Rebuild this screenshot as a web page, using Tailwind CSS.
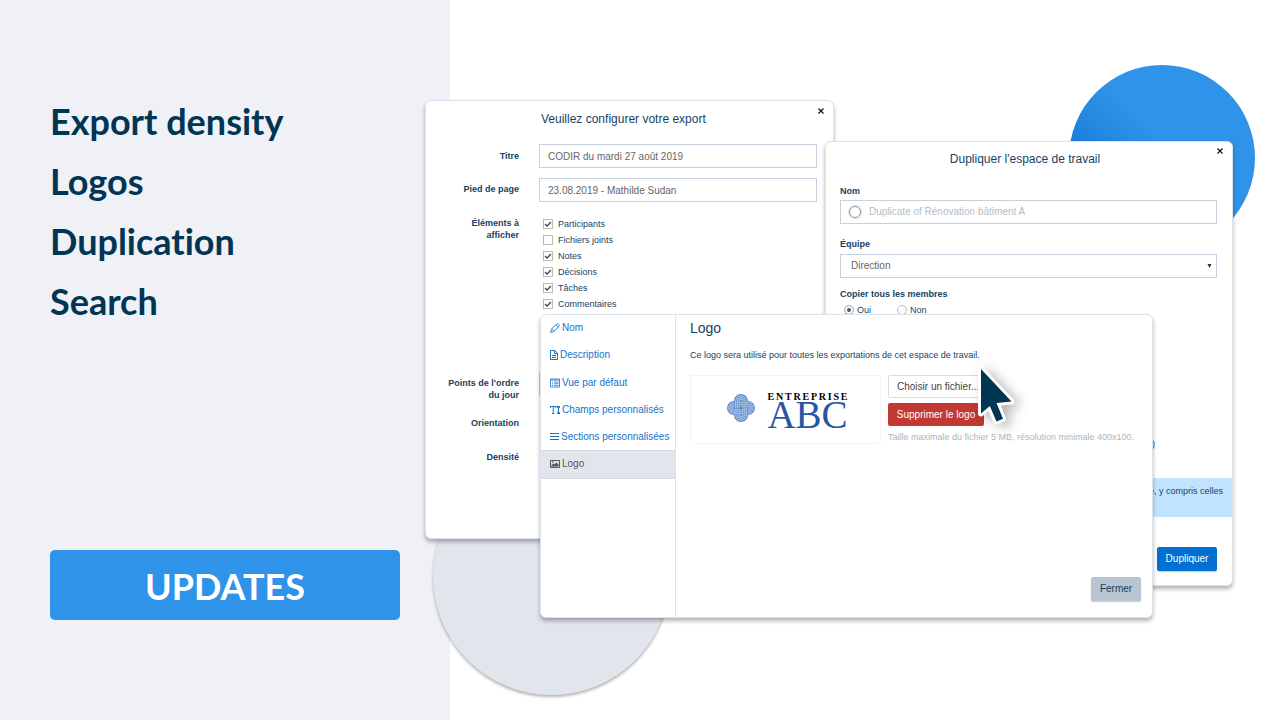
<!DOCTYPE html>
<html lang="fr">
<head>
<meta charset="utf-8">
<meta name="viewport" content="width=device-width, initial-scale=1">
<title>Updates</title>
<script src="https://cdn.jsdelivr.net/npm/@tailwindcss/browser@4"></script>
</head>
<body class="bg-white">
<div class="relative flex min-h-screen overflow-hidden font-['Liberation_Sans',Arial,sans-serif] text-[9px] leading-3 text-[#173f5f]">

  <aside class="flex w-[450px] shrink-0 flex-col justify-between bg-[#f0f1f6] px-[50px] pt-[91px] pb-[100px] font-['Lato',sans-serif] text-4xl font-bold text-[#003554] [font-variant-ligatures:none]" lang="en">
    <ul class="leading-[60px]">
      <li>Export density</li>
      <li>Logos</li>
      <li>Duplication</li>
      <li>Search</li>
    </ul>
    <button type="button" class="h-[70px] rounded-[5px] bg-[#2f93e9] pt-0.5 text-white">UPDATES</button>
  </aside>

  <main>
    <!-- decorative discs -->
    <div class="absolute top-[65px] left-[1069px] size-[186px] rounded-full bg-linear-to-tr from-[#0f78d4] from-20% to-[#2f93e9] to-55%"></div>
    <div class="absolute top-[458px] left-[433px] size-[237px] rounded-full bg-[#e1e6ed] shadow-[0_2px_3px_rgba(0,0,0,0.3)]"></div>

    <!-- export dialog -->
    <section class="absolute top-[100px] left-[425px] h-[439px] w-[409px] rounded-md border border-[#dde3ec] bg-white pt-2.5 pr-4 shadow-[0_3px_4px_rgba(0,0,0,0.3)]">
      <button type="button" aria-label="Fermer la configuration" class="absolute top-1.5 right-2 grid size-2 place-items-center">
        <svg class="size-[6px]" viewBox="0 0 6 6" fill="none" stroke="#111" stroke-width="1.200"><path d="M.5.500l5 5M5.500.500l-5 5"/></svg>
      </button>
      <h2 class="pl-[115px] text-xs leading-4">Veuillez configurer votre export</h2>
      <form class="mt-[17px] grid grid-cols-[93px_1fr] gap-x-5 gap-y-2.5">
        <label for="titre" class="pt-1.5 text-right font-bold">Titre</label>
        <input id="titre" value="CODIR du mardi 27 août 2019" class="h-6 border border-[#c5d1de] px-2 text-[10px] text-[#666]">
        <label for="pied" class="pt-[5px] text-right font-bold">Pied de page</label>
        <input id="pied" value="23.08.2019 - Mathilde Sudan" class="h-6 border border-[#c5d1de] px-2 text-[10px] text-[#666]">
        <p class="pt-[5px] pl-8 text-right font-bold">Éléments à afficher</p>
        <div class="flex h-[150px] flex-col pt-1 pl-1 leading-4">
          <label class="flex items-center gap-[5px]"><span class="grid"><input type="checkbox" checked class="col-start-1 row-start-1 size-[10px] appearance-none border border-[#bbb]"><svg class="col-start-1 row-start-1 size-[10px]" viewBox="0 0 10 10" fill="none" stroke="#444" stroke-width="1.300"><path d="M2 5l2 2 4-4"/></svg></span>Participants</label>
          <label class="flex items-center gap-[5px]"><span class="grid"><input type="checkbox" class="col-start-1 row-start-1 size-[10px] appearance-none border border-[#bbb]"></span>Fichiers joints</label>
          <label class="flex items-center gap-[5px]"><span class="grid"><input type="checkbox" checked class="col-start-1 row-start-1 size-[10px] appearance-none border border-[#bbb]"><svg class="col-start-1 row-start-1 size-[10px]" viewBox="0 0 10 10" fill="none" stroke="#444" stroke-width="1.300"><path d="M2 5l2 2 4-4"/></svg></span>Notes</label>
          <label class="flex items-center gap-[5px]"><span class="grid"><input type="checkbox" checked class="col-start-1 row-start-1 size-[10px] appearance-none border border-[#bbb]"><svg class="col-start-1 row-start-1 size-[10px]" viewBox="0 0 10 10" fill="none" stroke="#444" stroke-width="1.300"><path d="M2 5l2 2 4-4"/></svg></span>Décisions</label>
          <label class="flex items-center gap-[5px]"><span class="grid"><input type="checkbox" checked class="col-start-1 row-start-1 size-[10px] appearance-none border border-[#bbb]"><svg class="col-start-1 row-start-1 size-[10px]" viewBox="0 0 10 10" fill="none" stroke="#444" stroke-width="1.300"><path d="M2 5l2 2 4-4"/></svg></span>Tâches</label>
          <label class="flex items-center gap-[5px]"><span class="grid"><input type="checkbox" checked class="col-start-1 row-start-1 size-[10px] appearance-none border border-[#bbb]"><svg class="col-start-1 row-start-1 size-[10px]" viewBox="0 0 10 10" fill="none" stroke="#444" stroke-width="1.300"><path d="M2 5l2 2 4-4"/></svg></span>Commentaires</label>
        </div>
        <p class="pt-[5px] pl-4 text-right font-bold">Points de l'ordre du jour</p><span class="h-6 border border-[#c5d1de]"></span>
        <p class="pt-[6px] text-right font-bold">Orientation</p><span></span>
        <p class="pt-3 text-right font-bold">Densité</p><span></span>
      </form>
    </section>

    <!-- duplicate dialog -->
    <section class="absolute top-[141px] left-[825px] flex h-[445px] w-[408px] flex-col rounded-md border border-[#dde3ec] bg-white pt-[9px] shadow-[0_3px_4px_rgba(0,0,0,0.3)]">
      <button type="button" aria-label="Fermer la duplication" class="absolute top-[5px] right-2 grid size-2 place-items-center">
        <svg class="size-[6px]" viewBox="0 0 6 6" fill="none" stroke="#111" stroke-width="1.200"><path d="M.5.500l5 5M5.500.500l-5 5"/></svg>
      </button>
      <h2 class="pr-2 text-center text-xs leading-4">Dupliquer l'espace de travail</h2>
      <form class="flex flex-1 flex-col pt-[18px]">
        <label for="nom" class="px-3.5 font-bold">Nom</label>
        <div class="mt-[3px] mr-[15px] ml-3.5 flex h-6 items-center gap-2 border border-[#c5d1de] px-2">
          <span class="size-3 shrink-0 rounded-full border-[1px] border-[#8d99a5] ring-1 ring-[#8d99a5]/30"></span>
          <input id="nom" placeholder="Duplicate of Rénovation bâtiment A" class="w-full text-[10px] placeholder:text-[#b3bdc8]">
        </div>
        <label for="equipe" class="mt-3.5 px-3.5 font-bold">Équipe</label>
        <div class="mt-1 mr-[15px] ml-3.5 grid items-center">
          <select id="equipe" class="col-start-1 row-start-1 h-6 appearance-none border border-[#c5d1de] px-2.5 text-[10px] text-[#666]"><option>Direction</option></select>
          <svg class="pointer-events-none col-start-1 row-start-1 mr-[5px] h-1 w-[5px] justify-self-end" viewBox="0 0 5 4" fill="#333"><path d="M.5 0h4L2.500 4z"/></svg>
        </div>
        <fieldset class="px-3.5 pt-2.5">
          <legend class="contents font-bold">Copier tous les membres</legend>
          <div class="mt-1 flex gap-[26px] pl-1">
            <label class="flex items-center gap-[3px]"><input type="radio" name="membres" checked class="size-[10px] appearance-none rounded-full border border-[#bbb] bg-[#555] shadow-[inset_0_0_0_2px_white]">Oui</label>
            <label class="flex items-center gap-[3px]"><input type="radio" name="membres" class="size-[10px] appearance-none rounded-full border border-[#bbb]">Non</label>
          </div>
        </fieldset>
        <p class="mt-[122px] pr-[77px] text-right">)</p>
        <p class="mt-7 h-[39px] bg-[#c0e4ff] px-[9px] pt-[7px] text-right">e, y compris celles</p>
        <button type="button" class="mt-[30px] mr-[15px] h-6 w-[60px] self-end rounded-[2px] bg-[#0070d2] text-[10px] text-white shadow-[0_1px_1px_rgba(0,0,0,0.2)]">Dupliquer</button>
      </form>
    </section>

    <!-- workspace settings dialog -->
    <section class="absolute top-[314px] left-[540px] flex h-[304px] w-[613px] rounded-md border border-[#dde3ec] bg-white text-[10px] shadow-[0_3px_4px_rgba(0,0,0,0.3)]">
      <nav class="flex w-[135px] shrink-0 flex-col border-r border-[#dde3ec] whitespace-nowrap text-[#1572cb]">
        <a href="#nom" class="flex h-[27px] items-center gap-0.5 pb-0.5 pl-[9px]">
          <svg class="size-[10px] shrink-0" viewBox="0 0 10 10" fill="none" stroke="currentColor" stroke-width=".9"><path d="M.7 9.300l.6-3L6.700.9q.6-.5 1.200 0L9.100 2.100q.5.600 0 1.200L3.700 8.700zM5.700 2l2.300 2.300M2 6.200l1.800 1.800"/></svg>Nom</a>
        <a href="#description" class="flex h-[27px] items-center gap-0.5 pb-0.5 pl-[9px]">
          <svg class="h-[10px] w-2 shrink-0" viewBox="0 0 8 10" fill="none" stroke="currentColor"><path d="M.5.500h4.300l2.700 2.700v6.300h-7zM4.500.500v3h3M2 5.500h4M2 7.500h4"/></svg>Description</a>
        <a href="#vue" class="flex h-[27px] items-center gap-0.5 pl-[9px]">
          <svg class="size-[10px] shrink-0" viewBox="0 0 10 10" fill="none" stroke="currentColor" stroke-width=".8"><path d="M.5 1h9v8h-9zM.5 2h9M2 4h1M4 4h4.500M2 5.700h1M4 5.700h4.500M2 7.400h1M4 7.400h4.500"/></svg>Vue par défaut</a>
        <a href="#champs" class="flex h-[27px] items-center gap-0.5 pl-[9px]">
          <svg class="size-[10px] shrink-0" viewBox="0 0 10 10" fill="none" stroke="currentColor"><path d="M.500 3V1.500h5.500V3M3.250 1.500v7M2 8.500h2.500M8.500 1.500v7M7 1.500h3M7 8.500h3M7.300 3l1.200-1.200L9.700 3M7.300 7l1.200 1.200L9.700 7"/></svg>Champs personnalisés</a>
        <a href="#sections" class="flex h-[27px] items-center gap-0.5 pl-[9px]">
          <svg class="h-[10px] w-[9px] shrink-0" viewBox="0 0 9 10" fill="none" stroke="currentColor"><path d="M0 1.500h9M0 4.500h9M0 7.500h9"/></svg>Sections personnalisées</a>
        <a href="#logo" aria-current="page" class="flex h-[29px] items-center gap-0.5 border-y border-[#d3dae3] bg-[#e1e6ed] pb-px pl-[9px] text-[#555]">
          <svg class="size-[10px] shrink-0" viewBox="0 0 10 10" fill="none" stroke="currentColor"><path d="M.5 1.500h9v7h-9z"/><path d="M1.500 7.500V6L3.500 4.500l1 1L6.500 3.500l2 2v2zM2 2.500h1.500v1.200H2z" fill="currentColor" stroke="none"/></svg>Logo</a>
      </nav>
      <div class="flex flex-1 flex-col pt-1 pr-[11px] pb-4 pl-3.5">
        <h2 class="text-sm leading-[18px]">Logo</h2>
        <p class="mt-3 text-[9px]">Ce logo sera utilisé pour toutes les exportations de cet espace de travail.</p>
        <div class="mt-3.5 flex gap-[7px]">
          <div class="flex h-[69px] w-[191px] shrink-0 items-center justify-center gap-3 rounded-[2px] border border-[#f3f4f6] pl-1">
            <svg class="mb-1 size-7" viewBox="0 0 30 30" fill="none">
              <defs>
                <g id="lobe">
                  <path stroke="#5a86c8" stroke-width="7.500" d="M11.200 16V7.600a3.800 3.800 0 0 1 7.600 0V16"/>
                  <path stroke="#b4caea" stroke-width="5" d="M11.200 16V7.600a3.800 3.800 0 0 1 7.600 0V16"/>
                  <path stroke="#6a93d0" stroke-width="3" d="M11.200 16V7.600a3.800 3.800 0 0 1 7.600 0V16"/>
                  <path stroke="#b4caea" stroke-width="1" d="M11.200 16V7.600a3.800 3.800 0 0 1 7.600 0V16"/>
                </g>
                <g id="strand">
                  <path fill="#6a93d0" d="M7.500 7h6.500v8.500H7.500z"/>
                  <path stroke="#b4caea" d="M9 7v8.500M11 7v8.500M13 7v8.500"/>
                </g>
              </defs>
              <use href="#lobe"/>
              <use href="#lobe" transform="rotate(90 15 15)"/>
              <use href="#lobe" transform="rotate(180 15 15)"/>
              <use href="#lobe" transform="rotate(270 15 15)"/>
              <use href="#strand"/>
              <use href="#strand" transform="rotate(90 15 15)"/>
              <use href="#strand" transform="rotate(180 15 15)"/>
              <use href="#strand" transform="rotate(270 15 15)"/>
              <path fill="#3f6fb8" d="M14 14h2v2h-2z"/>
            </svg>
            <div class="flex flex-col items-center pt-0.5 font-['Liberation_Serif',serif]">
              <span class="flex w-20 justify-between text-[10px] leading-[9px] font-bold text-black"><span>E</span><span>N</span><span>T</span><span>R</span><span>E</span><span>P</span><span>R</span><span>I</span><span>S</span><span>E</span></span>
              <span class="text-[39px] leading-[28px] text-[#2955a5]">ABC</span>
            </div>
          </div>
          <div class="flex flex-col items-start">
            <button type="button" class="h-[23px] w-24 rounded-[2px] border border-[#d5dde7] pl-2 text-left whitespace-nowrap text-[#444]">Choisir un fichier...</button>
            <button type="button" class="mt-[5px] h-[23px] w-24 rounded-[2px] bg-[#c23934] text-white">Supprimer le logo</button>
            <p class="mt-[5px] text-[9px] whitespace-nowrap text-[#aab5c2]">Taille maximale du fichier 5 MB, résolution minimale 400x100.</p>
          </div>
        </div>
        <button type="button" class="mt-auto h-6 w-[50px] self-end rounded-[2px] bg-[#b8c4d2] shadow-[0_1px_1px_rgba(0,0,0,0.2)]">Fermer</button>
      </div>
    </section>

    <!-- pointer -->
    <svg class="absolute top-[360px] left-[970px] h-[75px] w-[65px] drop-shadow-[5px_3px_6px_rgba(0,0,0,0.3)]" viewBox="970 360 65 75">
      <path d="M981 369v44.500l8.800-7.500 6.700 15.500 6.500-2.700-6.500-15.800 15-1.500z" fill="#003554" stroke="#fff" stroke-width="6" stroke-linejoin="round" paint-order="stroke"/>
    </svg>
  </main>
</div>
</body>
</html>
